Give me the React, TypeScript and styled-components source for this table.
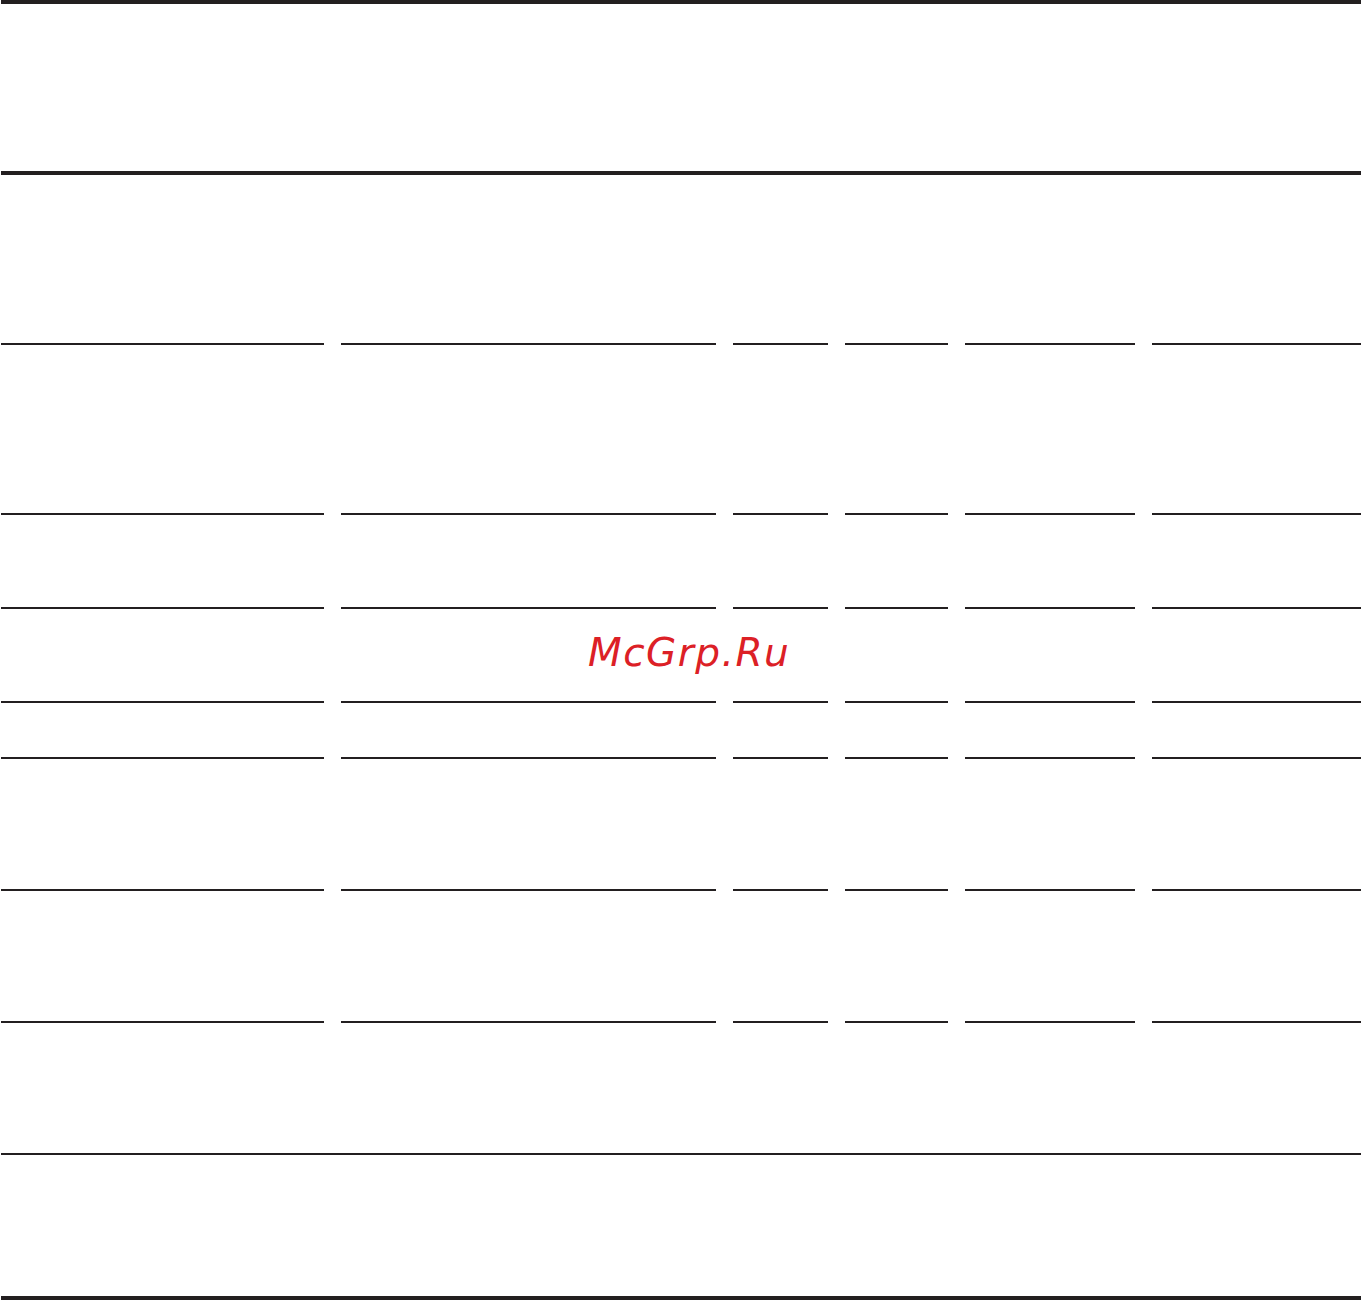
import React from "react";
import styled, { createGlobalStyle } from "styled-components";

const GlobalStyle = createGlobalStyle`
  html, body { margin: 0; padding: 0; background: #ffffff; }
  body { font-family: "DejaVu Sans", sans-serif; }
`;

const Page = styled.div`
  position: relative;
  width: 1362px;
  height: 1300px;
  background: #ffffff;
  overflow: hidden;
`;

const Table = styled.div`
  display: flex;
  flex-direction: column;
  padding-left: 1px;
  width: 1360px;
`;

const ThickRule = styled.div`
  height: 4px;
  background: #231f20;
`;

const ThinRule = styled.div`
  height: 2px;
  background: #231f20;
`;

const Band = styled.div<{ $h: number }>`
  height: ${(p) => p.$h}px;
`;

const Row = styled.div<{ $h: number }>`
  display: grid;
  grid-template-columns: 323px 375px 95px 103px 170px 209px;
  column-gap: 17px;
  height: ${(p) => p.$h}px;
`;

const Cell = styled.div`
  border-bottom: 2px solid #231f20;
`;

const Watermark = styled.div`
  position: absolute;
  left: 588px;
  top: 630px;
  font-family: "DejaVu Sans", sans-serif;
  font-style: oblique;
  font-size: 39px;
  letter-spacing: 1.5px;
  line-height: 1.164;
  color: #dc2026;
  white-space: nowrap;
`;

const rowHeights = [170, 170, 94, 94, 56, 132, 132];

export default function App() {
  return (
    <>
      <GlobalStyle />
      <Page>
        <Table>
          <ThickRule />
          <Band $h={167} />
          <ThickRule />
          {rowHeights.map((h, i) => (
            <Row key={i} $h={h}>
              {Array.from({ length: 6 }).map((_, j) => (
                <Cell key={j} />
              ))}
            </Row>
          ))}
          <Band $h={130} />
          <ThinRule />
          <Band $h={141} />
          <ThickRule />
        </Table>
        <Watermark>McGrp.Ru</Watermark>
      </Page>
    </>
  );
}
